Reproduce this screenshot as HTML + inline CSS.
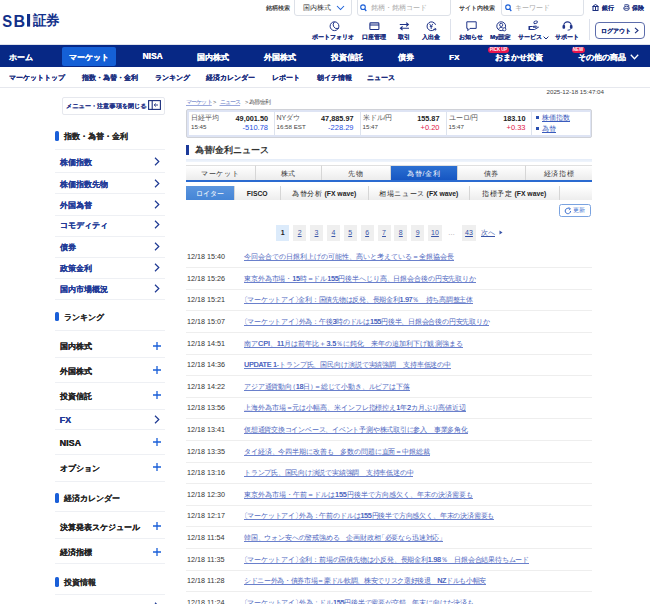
<!DOCTYPE html>
<html><head><meta charset="utf-8">
<style>
html,body{margin:0;padding:0;background:#fff;}
body{width:650px;height:604px;overflow:hidden;position:relative;font-family:"Liberation Sans",sans-serif;color:#222;}
.a{position:absolute;white-space:nowrap;}
.nv{color:#1b2f7e;}
.hdr-box{position:absolute;border:1px solid #dde1e8;border-radius:3px;background:#fff;box-sizing:border-box;}
.hl{font-size:6px;line-height:8px;color:#444;font-weight:normal;text-shadow:0.2px 0 0 #444;}
.icl{font-size:6px;line-height:8px;font-weight:bold;color:#1b2f7e;}
.nav{position:absolute;left:0;top:45px;width:650px;height:22px;background:#072885;}
.nvi{position:absolute;white-space:nowrap;top:51.5px;font-size:8px;line-height:11px;font-weight:bold;color:#fff;}
.sub{font-size:7px;line-height:10px;font-weight:bold;color:#1b2f7e;top:72.8px;}
.sline{position:absolute;left:55px;width:110px;height:1px;background:#eef0f4;}
.sh{position:absolute;white-space:nowrap;left:63.5px;font-size:8px;line-height:11px;font-weight:bold;color:#222;}
.pill{position:absolute;left:55px;width:4px;height:9.5px;border-radius:1.6px;background:#1a5fd8;}
.si{position:absolute;white-space:nowrap;left:59.5px;font-size:8px;line-height:10px;font-weight:bold;}
.blu{color:#213a97;}
.blk{color:#222;}
.chev{position:absolute;left:154px;width:6px;height:9px;}
.plus{position:absolute;left:153px;width:8px;height:8px;}
.dt{position:absolute;white-space:nowrap;left:187px;font-size:7.2px;line-height:9px;color:#333;}
.tt{position:absolute;white-space:nowrap;left:244px;font-size:7px;line-height:9px;color:#4d66c0;}
.rsep{position:absolute;left:186px;width:406px;height:1px;background:#eeeeee;}
.pg{position:absolute;top:224.5px;height:16px;width:13px;background:#efefef;font-size:7px;line-height:16px;text-align:center;color:#2f4ca6;text-decoration:underline;}
.si,.sub,.icl{text-shadow:0.35px 0 0 currentColor;}
.sh{text-shadow:0.15px 0 0 currentColor;color:#2a2a2a;}
.nvi{text-shadow:0.3px 0 0 #fff;}
</style></head><body>

<!-- HEADER -->
<svg class="a" style="left:0;top:8px" width="64" height="22" viewBox="0 0 64 22">
<text x="2.3" y="18.6" font-family="Liberation Sans" font-weight="bold" font-size="17.4" fill="#12308a" textLength="9.9" lengthAdjust="spacingAndGlyphs">S</text>
<text x="13.4" y="18.6" font-family="Liberation Sans" font-weight="bold" font-size="17.4" fill="#12308a" textLength="11.6" lengthAdjust="spacingAndGlyphs">B</text>
<rect x="27" y="6" width="3.1" height="12.6" fill="#12308a"/>
<text x="32.6" y="17.2" font-family="Liberation Sans" font-weight="bold" font-size="14" fill="#12308a" textLength="27" lengthAdjust="spacingAndGlyphs">証券</text>
</svg>

<div class="a hl" style="left:266px;top:4px;">銘柄検索</div>
<div class="hdr-box" style="left:294px;top:-3px;width:58px;height:18.5px;"></div>
<div class="a" style="left:303px;top:3px;font-size:7px;line-height:10px;color:#333;">国内株式</div>
<svg class="a" style="left:335.5px;top:5px" width="9" height="6" viewBox="0 0 9 6"><path d="M1 1 L4.5 4.5 L8 1" fill="none" stroke="#1a5fd8" stroke-width="1.05"/></svg>
<div class="hdr-box" style="left:356.5px;top:-3px;width:94px;height:18.5px;"></div>
<svg class="a" style="left:359.5px;top:3.5px" width="7" height="8" viewBox="0 0 7 8"><circle cx="3" cy="3.2" r="2.3" fill="none" stroke="#1a5fd8" stroke-width="1.1"/><path d="M4.6 5 L6.3 7" stroke="#1a5fd8" stroke-width="1.2"/></svg>
<div class="a" style="left:371px;top:3px;font-size:7px;line-height:10px;color:#aaa;">銘柄・銘柄コード</div>

<div class="a hl" style="left:459px;top:4px;">サイト内検索</div>
<div class="hdr-box" style="left:500.5px;top:-3px;width:83px;height:18.5px;"></div>
<svg class="a" style="left:505px;top:3.5px" width="7" height="8" viewBox="0 0 7 8"><circle cx="3" cy="3.2" r="2.3" fill="none" stroke="#1a5fd8" stroke-width="1.1"/><path d="M4.6 5 L6.3 7" stroke="#1a5fd8" stroke-width="1.2"/></svg>
<div class="a" style="left:515px;top:3px;font-size:7px;line-height:10px;color:#aaa;">キーワード</div>

<svg class="a" style="left:592px;top:4px" width="7" height="7" viewBox="0 0 7 7"><path d="M0.5 2.5 L3.5 0.5 L6.5 2.5 Z M1 3 V6 M3.5 3 V6 M6 3 V6 M0.5 6.5 H6.5" fill="none" stroke="#1b2f7e" stroke-width="1"/></svg>
<div class="a icl" style="left:601.5px;top:4.3px;">銀行</div>
<svg class="a" style="left:622.5px;top:3.8px" width="7" height="7" viewBox="0 0 7 7"><path d="M1.2 1.2 L3.5 0.5 L5.8 1.2 L5.8 2.6" fill="none" stroke="#1b2f7e" stroke-width="0.9"/><ellipse cx="3.5" cy="4.3" rx="2.8" ry="2.1" fill="none" stroke="#1b2f7e" stroke-width="0.9"/><path d="M1.2 4.3 H5.8" stroke="#1b2f7e" stroke-width="0.8"/></svg>
<div class="a icl" style="left:632px;top:4.3px;">保険</div>

<!-- icon row -->
<svg class="a" style="left:328.5px;top:20.5px" width="11" height="11" viewBox="0 0 11 11"><circle cx="5.5" cy="5.2" r="4.4" fill="none" stroke="#1f3388" stroke-width="1"/><path d="M5.5 0.8 Q3.2 3 4.6 5.6 Q6.2 8.4 9.6 7.4" fill="none" stroke="#1f3388" stroke-width="1"/></svg>
<div class="a icl" style="left:312px;top:33px;">ポートフォリオ</div>
<svg class="a" style="left:369px;top:21.5px" width="11" height="9" viewBox="0 0 11 9"><rect x="0.9" y="0.9" width="9" height="6.6" rx="0.8" fill="none" stroke="#1f3388" stroke-width="1.1"/><path d="M0.9 3 H9.9" stroke="#1f3388" stroke-width="1.1"/></svg>
<div class="a icl" style="left:362px;top:33px;">口座管理</div>
<svg class="a" style="left:398.5px;top:21.5px" width="11" height="9" viewBox="0 0 11 9"><path d="M0.8 2.5 H9.2 M7.2 0.6 L9.4 2.5 L7.2 4.4 M10 6.3 H1.6 M3.6 4.4 L1.4 6.3 L3.6 8.2" fill="none" stroke="#1f3388" stroke-width="1.1"/></svg>
<div class="a icl" style="left:398px;top:33px;">取引</div>
<svg class="a" style="left:425.5px;top:20.5px" width="11" height="11" viewBox="0 0 11 11"><path d="M9.4 7.2 A4.4 4.4 0 1 1 9.6 3.8" fill="none" stroke="#1f3388" stroke-width="1"/><path d="M3.5 2.8 L5.2 5.4 L6.9 2.8 M5.2 5.4 V8 M3.8 5.6 H6.6" fill="none" stroke="#1f3388" stroke-width="0.9"/><path d="M7.2 8.4 H10.2 M8.8 7.2 L10.2 8.4 L8.8 9.6" fill="none" stroke="#1f3388" stroke-width="0.8"/></svg>
<div class="a icl" style="left:421.5px;top:33px;">入出金</div>

<div class="a" style="left:449.5px;top:19px;width:1.2px;height:21px;background:#dde1eb;"></div>
<svg class="a" style="left:465.5px;top:20.5px" width="11" height="11" viewBox="0 0 11 11"><path d="M0.8 0.8 H10.2 V7.4 H4 L1.8 9.6 V7.4 H0.8 Z" fill="none" stroke="#1f3388" stroke-width="1"/></svg>
<div class="a icl" style="left:459px;top:33px;">お知らせ</div>
<svg class="a" style="left:495.5px;top:20.5px" width="11" height="11" viewBox="0 0 11 11"><circle cx="5.2" cy="5.2" r="4.4" fill="none" stroke="#1f3388" stroke-width="1"/><circle cx="5.2" cy="3.9" r="1.6" fill="none" stroke="#1f3388" stroke-width="0.9"/><path d="M2.4 8.2 Q3.6 5.8 6.6 6.4" fill="none" stroke="#1f3388" stroke-width="0.9"/><circle cx="8.3" cy="8.3" r="1.6" fill="#fff" stroke="#1f3388" stroke-width="0.9"/></svg>
<div class="a icl" style="left:490px;top:33px;">My設定</div>
<svg class="a" style="left:527.5px;top:19.5px" width="12" height="11" viewBox="0 0 12 11"><ellipse cx="7.6" cy="2.3" rx="1.8" ry="1.2" fill="none" stroke="#1f3388" stroke-width="0.9" transform="rotate(-25 7.6 2.3)"/><path d="M1 6.5 H4.5 L8.4 6 Q9.2 6.5 8.4 7.2 H5 M1 9.5 H6.5 L10.8 7" fill="none" stroke="#1f3388" stroke-width="1"/><rect x="0.5" y="6" width="1.6" height="4" fill="#1f3388"/></svg>
<div class="a icl" style="left:518px;top:33px;">サービス</div><svg class="a" style="left:543px;top:36px" width="6" height="4" viewBox="0 0 6 4"><path d="M0.6 0.6 L3 3 L5.4 0.6" fill="none" stroke="#1b2f7e" stroke-width="1"/></svg>
<svg class="a" style="left:562px;top:21px" width="11" height="10" viewBox="0 0 11 10"><path d="M1.8 5.5 V4.6 A3.7 3.7 0 0 1 9.2 4.6 V5.5" fill="none" stroke="#1f3388" stroke-width="1.1"/><rect x="0.5" y="4" width="2.6" height="3.8" rx="1" fill="#1f3388"/><rect x="7.9" y="4" width="2.6" height="3.8" rx="1" fill="#1f3388"/><path d="M8.8 7.6 Q8.6 9.2 5.6 9.2" fill="none" stroke="#1f3388" stroke-width="0.9"/></svg>
<div class="a icl" style="left:555px;top:33px;">サポート</div>
<div class="a" style="left:589px;top:19px;width:1.2px;height:21px;background:#dde1eb;"></div>
<div class="a" style="left:595px;top:22px;width:49.5px;height:16.8px;border:1px solid #5d6dab;border-radius:4px;box-sizing:border-box;"></div>
<div class="a icl" style="left:600.5px;top:26.5px;font-size:6px;">ログアウト</div>
<svg class="a" style="left:633.5px;top:27px" width="5" height="7" viewBox="0 0 5 7"><path d="M1 0.8 L4 3.5 L1 6.2" fill="none" stroke="#1b2f7e" stroke-width="1.1"/></svg>

<div class="a" style="left:0;top:44px;width:650px;height:1px;background:#dfe2ea;"></div>

<!-- NAV -->
<div class="nav"></div>
<div class="a" style="left:62px;top:47px;width:54px;height:18.5px;background:#1560d6;border-radius:2px;"></div>
<div class="a nvi" style="left:9px;">ホーム</div>
<div class="a nvi" style="left:68.5px;">マーケット</div>
<div class="a nvi" style="left:142.5px;font-size:8.4px;top:51.3px;">NISA</div>
<div class="a nvi" style="left:196.5px;">国内株式</div>
<div class="a nvi" style="left:263.5px;">外国株式</div>
<div class="a nvi" style="left:331px;">投資信託</div>
<div class="a nvi" style="left:397.5px;">債券</div>
<div class="a nvi" style="left:449px;">FX</div>
<div class="a nvi" style="left:494.5px;">おまかせ投資</div>
<div class="a nvi" style="left:578px;">その他の商品</div>
<svg class="a" style="left:630px;top:53.5px" width="9" height="6" viewBox="0 0 9 6"><path d="M0.8 0.8 L4.5 4.8 L8.2 0.8" fill="none" stroke="#fff" stroke-width="1.3"/></svg>
<div class="a" style="left:488px;top:47px;width:21px;height:5.5px;background:#e8164d;border-radius:3px;color:#fff;font-size:4.5px;line-height:5.5px;font-weight:bold;text-align:center;letter-spacing:-0.1px;">PICK UP</div>
<div class="a" style="left:571.5px;top:47px;width:13px;height:5.5px;background:#e8164d;border-radius:3px;color:#fff;font-size:4.5px;line-height:5.5px;font-weight:bold;text-align:center;">NEW</div>

<!-- SUB NAV -->
<div class="a sub" style="left:9px;">マーケットトップ</div>
<div class="a sub" style="left:82px;">指数・為替・金利</div>
<div class="a sub" style="left:155px;">ランキング</div>
<div class="a sub" style="left:206px;">経済カレンダー</div>
<div class="a sub" style="left:272px;">レポート</div>
<div class="a sub" style="left:317px;">朝イチ情報</div>
<div class="a sub" style="left:367px;">ニュース</div>
<div class="a" style="left:0;top:87px;width:650px;height:1px;background:#e6e8ee;"></div>

<!-- SIDEBAR -->
<div class="a" style="left:61.5px;top:97px;width:103.5px;height:17.5px;border:1px solid #e6e8ee;border-radius:2px;box-sizing:border-box;"></div>
<div class="a" style="left:66px;top:102.3px;font-size:6px;line-height:8px;font-weight:bold;color:#1f3388;letter-spacing:0.2px;text-shadow:0.3px 0 0 #1f3388;">メニュー・注意事項を閉じる</div>
<svg class="a" style="left:148px;top:100px" width="13" height="10" viewBox="0 0 13 10"><rect x="0.6" y="0.6" width="11.8" height="8.8" fill="none" stroke="#1b2f7e" stroke-width="1.1"/><path d="M4.2 0.6 V9.4" stroke="#1b2f7e" stroke-width="1.1"/><path d="M6.2 5 H10 M7.8 3.5 L6.2 5 L7.8 6.5" fill="none" stroke="#1b2f7e" stroke-width="0.9"/></svg>
<div class="pill" style="top:131.1px"></div>
<div class="sh" style="top:130.9px">指数・為替・金利</div>
<div class="sline" style="top:148.5px"></div>
<div class="si blu" style="top:157.9px;">株価指数</div>
<svg class="chev" style="top:156.9px" viewBox="0 0 6 9"><path d="M1 0.8 L4.8 4.5 L1 8.2" fill="none" stroke="#1f3a93" stroke-width="1.2"/></svg>
<div class="sline" style="top:172px"></div>
<div class="si blu" style="top:179.5px;">株価指数先物</div>
<svg class="chev" style="top:178.5px" viewBox="0 0 6 9"><path d="M1 0.8 L4.8 4.5 L1 8.2" fill="none" stroke="#1f3a93" stroke-width="1.2"/></svg>
<div class="sline" style="top:193.3px"></div>
<div class="si blu" style="top:200.5px;">外国為替</div>
<svg class="chev" style="top:199.5px" viewBox="0 0 6 9"><path d="M1 0.8 L4.8 4.5 L1 8.2" fill="none" stroke="#1f3a93" stroke-width="1.2"/></svg>
<div class="sline" style="top:214.5px"></div>
<div class="si blu" style="top:221.3px;">コモディティ</div>
<svg class="chev" style="top:220.3px" viewBox="0 0 6 9"><path d="M1 0.8 L4.8 4.5 L1 8.2" fill="none" stroke="#1f3a93" stroke-width="1.2"/></svg>
<div class="sline" style="top:235.5px"></div>
<div class="si blu" style="top:242.5px;">債券</div>
<svg class="chev" style="top:241.5px" viewBox="0 0 6 9"><path d="M1 0.8 L4.8 4.5 L1 8.2" fill="none" stroke="#1f3a93" stroke-width="1.2"/></svg>
<div class="sline" style="top:256.5px"></div>
<div class="si blu" style="top:263.8px;">政策金利</div>
<svg class="chev" style="top:262.8px" viewBox="0 0 6 9"><path d="M1 0.8 L4.8 4.5 L1 8.2" fill="none" stroke="#1f3a93" stroke-width="1.2"/></svg>
<div class="sline" style="top:277.7px"></div>
<div class="si blu" style="top:285.0px;">国内市場概況</div>
<svg class="chev" style="top:284.0px" viewBox="0 0 6 9"><path d="M1 0.8 L4.8 4.5 L1 8.2" fill="none" stroke="#1f3a93" stroke-width="1.2"/></svg>
<div class="sline" style="top:299px"></div>
<div class="pill" style="top:311.7px"></div>
<div class="sh" style="top:311.5px">ランキング</div>
<div class="sline" style="top:330.4px"></div>
<div class="si blk" style="top:342.1px;">国内株式</div>
<svg class="plus" style="top:341.6px" viewBox="0 0 8 8"><path d="M4 0 V8 M0 4 H8" stroke="#1a5fd8" stroke-width="1.3"/></svg>
<div class="sline" style="top:357.4px"></div>
<div class="si blk" style="top:366.9px;">外国株式</div>
<svg class="plus" style="top:366.4px" viewBox="0 0 8 8"><path d="M4 0 V8 M0 4 H8" stroke="#1a5fd8" stroke-width="1.3"/></svg>
<div class="sline" style="top:382.4px"></div>
<div class="si blk" style="top:391.7px;">投資信託</div>
<svg class="plus" style="top:391.2px" viewBox="0 0 8 8"><path d="M4 0 V8 M0 4 H8" stroke="#1a5fd8" stroke-width="1.3"/></svg>
<div class="sline" style="top:408.6px"></div>
<div class="si blu" style="top:414.9px;font-size:9px;">FX</div>
<svg class="chev" style="top:414.9px" viewBox="0 0 6 9"><path d="M1 0.8 L4.8 4.5 L1 8.2" fill="none" stroke="#1f3a93" stroke-width="1.2"/></svg>
<div class="sline" style="top:429.4px"></div>
<div class="si blk" style="top:437.9px;font-size:9px;">NISA</div>
<svg class="plus" style="top:438.4px" viewBox="0 0 8 8"><path d="M4 0 V8 M0 4 H8" stroke="#1a5fd8" stroke-width="1.3"/></svg>
<div class="sline" style="top:454.4px"></div>
<div class="si blk" style="top:463.9px;">オプション</div>
<svg class="plus" style="top:463.4px" viewBox="0 0 8 8"><path d="M4 0 V8 M0 4 H8" stroke="#1a5fd8" stroke-width="1.3"/></svg>
<div class="sline" style="top:480.6px"></div>
<div class="pill" style="top:493.09999999999997px"></div>
<div class="sh" style="top:492.9px">経済カレンダー</div>
<div class="sline" style="top:510.6px"></div>
<div class="si blk" style="top:522.9px;">決算発表スケジュール</div>
<svg class="plus" style="top:522.4px" viewBox="0 0 8 8"><path d="M4 0 V8 M0 4 H8" stroke="#1a5fd8" stroke-width="1.3"/></svg>
<div class="sline" style="top:538.4px"></div>
<div class="si blk" style="top:548.1px;">経済指標</div>
<svg class="plus" style="top:547.6px" viewBox="0 0 8 8"><path d="M4 0 V8 M0 4 H8" stroke="#1a5fd8" stroke-width="1.3"/></svg>
<div class="sline" style="top:563.4px"></div>
<div class="pill" style="top:577.1px"></div>
<div class="sh" style="top:576.9px">投資情報</div>
<div class="sline" style="top:594.4px"></div>
<svg class="chev" style="top:602.3px" viewBox="0 0 6 9"><path d="M1 0.8 L4.8 4.5 L1 8.2" fill="none" stroke="#1f3a93" stroke-width="1.2"/></svg>


<!-- MAIN -->
<div class="a" style="left:186px;top:97.8px;font-size:5.7px;line-height:8px;letter-spacing:-0.85px;color:#6378c4;text-decoration:underline;text-decoration-color:#9aa8dc;">マーケット</div>
<div class="a" style="left:213px;top:97.8px;font-size:5.7px;line-height:8px;letter-spacing:-0.85px;color:#555;">&gt;</div>
<div class="a" style="left:219.5px;top:97.8px;font-size:5.7px;line-height:8px;letter-spacing:-0.85px;color:#6378c4;text-decoration:underline;text-decoration-color:#9aa8dc;">ニュース</div>
<div class="a" style="left:245px;top:97.8px;font-size:5.7px;line-height:8px;letter-spacing:-0.85px;color:#555;">&gt;</div>
<div class="a" style="left:249px;top:97.8px;font-size:5.7px;line-height:8px;letter-spacing:-0.85px;color:#555;">為替/金利</div>
<div class="a" style="left:546.5px;top:88px;font-size:6.2px;line-height:8px;color:#444;">2025-12-18 15:47:04</div>
<div class="a" style="left:186px;top:109px;width:406px;height:28.5px;background:#dee4f4;border:1px solid #d0d2d8;border-radius:2px;box-sizing:border-box;"></div>
<div class="a" style="left:189px;top:112px;width:400.5px;height:23px;background:#fff;"></div>
<div class="a" style="left:274px;top:112px;width:1px;height:23px;background:#dde3ee;"></div>
<div class="a" style="left:360px;top:112px;width:1px;height:23px;background:#dde3ee;"></div>
<div class="a" style="left:445.5px;top:112px;width:1px;height:23px;background:#dde3ee;"></div>
<div class="a" style="left:530.5px;top:112px;width:1px;height:23px;background:#dde3ee;"></div>
<div class="a" style="left:191px;top:113px;font-size:7px;line-height:9px;color:#555;">日経平均</div>
<div class="a" style="left:191px;top:122.5px;font-size:6.2px;line-height:8px;color:#444;">15:45</div>
<div class="a" style="left:188px;width:80px;text-align:right;top:113.5px;font-size:7.3px;line-height:9px;font-weight:bold;color:#222;">49,001.50</div>
<div class="a" style="left:188px;width:80px;text-align:right;top:122.7px;font-size:7.5px;line-height:9px;color:#1f50e0;">-510.78</div>
<div class="a" style="left:276.5px;top:113px;font-size:7px;line-height:9px;color:#555;">NYダウ</div>
<div class="a" style="left:276.5px;top:122.5px;font-size:6.2px;line-height:8px;color:#444;">16:58 EST</div>
<div class="a" style="left:273.5px;width:80px;text-align:right;top:113.5px;font-size:7.3px;line-height:9px;font-weight:bold;color:#222;">47,885.97</div>
<div class="a" style="left:273.5px;width:80px;text-align:right;top:122.7px;font-size:7.5px;line-height:9px;color:#1f50e0;">-228.29</div>
<div class="a" style="left:362.5px;top:113px;font-size:7px;line-height:9px;color:#555;">米ドル/円</div>
<div class="a" style="left:362.5px;top:122.5px;font-size:6.2px;line-height:8px;color:#444;">15:47</div>
<div class="a" style="left:359.5px;width:80px;text-align:right;top:113.5px;font-size:7.3px;line-height:9px;font-weight:bold;color:#222;">155.87</div>
<div class="a" style="left:359.5px;width:80px;text-align:right;top:122.7px;font-size:7.5px;line-height:9px;color:#e0204a;">+0.20</div>
<div class="a" style="left:448.5px;top:113px;font-size:7px;line-height:9px;color:#555;">ユーロ/円</div>
<div class="a" style="left:448.5px;top:122.5px;font-size:6.2px;line-height:8px;color:#444;">15:47</div>
<div class="a" style="left:445.5px;width:80px;text-align:right;top:113.5px;font-size:7.3px;line-height:9px;font-weight:bold;color:#222;">183.10</div>
<div class="a" style="left:445.5px;width:80px;text-align:right;top:122.7px;font-size:7.5px;line-height:9px;color:#e0204a;">+0.33</div>
<div class="a" style="left:535.5px;top:115.5px;width:3.5px;height:3.5px;background:#2a4fb0;"></div>
<div class="a" style="left:542px;top:112.8px;font-size:7px;line-height:9px;color:#3a5bbd;text-decoration:underline;">株価指数</div>
<div class="a" style="left:535.5px;top:126.60000000000001px;width:3.5px;height:3.5px;background:#2a4fb0;"></div>
<div class="a" style="left:542px;top:123.9px;font-size:7px;line-height:9px;color:#3a5bbd;text-decoration:underline;">為替</div>
<div class="a" style="left:186px;top:145.4px;width:3px;height:9.3px;background:#1c3a9a;"></div>
<div class="a" style="left:194.5px;top:144.5px;font-size:9px;line-height:11px;font-weight:bold;color:#333;">為替/金利ニュース</div>
<div class="a" style="left:186px;top:158.5px;width:406px;height:3px;background:linear-gradient(#e4ecf8,#f0f5fc);"></div>
<div class="a" style="left:186px;top:165px;width:68.5px;height:15px;background:linear-gradient(#ffffff,#ececec);box-sizing:border-box;border-top:1px solid #e0e0e0;font-size:6.8px;line-height:16px;letter-spacing:0.7px;text-align:center;color:#333;">マーケット</div>
<div class="a" style="left:254.5px;top:165px;width:66.5px;height:15px;background:linear-gradient(#ffffff,#ececec);border-left:1px solid #d6d6d6;box-sizing:border-box;border-top:1px solid #e0e0e0;font-size:6.8px;line-height:16px;letter-spacing:0.7px;text-align:center;color:#333;">株式</div>
<div class="a" style="left:321px;top:165px;width:68.5px;height:15px;background:linear-gradient(#ffffff,#ececec);border-left:1px solid #d6d6d6;box-sizing:border-box;border-top:1px solid #e0e0e0;font-size:6.8px;line-height:16px;letter-spacing:0.7px;text-align:center;color:#333;">先物</div>
<div class="a" style="left:389.5px;top:165px;width:67.5px;height:15px;background:linear-gradient(#2c70d2,#1656c2);border-left:1px solid #d6d6d6;box-sizing:border-box;border-top:1px solid #e0e0e0;font-size:6.8px;line-height:16px;letter-spacing:0.7px;text-align:center;color:#fff;">為替/金利</div>
<div class="a" style="left:457px;top:165px;width:68px;height:15px;background:linear-gradient(#ffffff,#ececec);border-left:1px solid #d6d6d6;box-sizing:border-box;border-top:1px solid #e0e0e0;font-size:6.8px;line-height:16px;letter-spacing:0.7px;text-align:center;color:#333;">債券</div>
<div class="a" style="left:525px;top:165px;width:67px;height:15px;background:linear-gradient(#ffffff,#ececec);border-left:1px solid #d6d6d6;box-sizing:border-box;border-top:1px solid #e0e0e0;font-size:6.8px;line-height:16px;letter-spacing:0.7px;text-align:center;color:#333;">経済指標</div>
<div class="a" style="left:186px;top:179.8px;width:406px;height:1.8px;background:#2a6ad0;"></div>
<div class="a" style="left:186px;top:186px;width:48px;height:14px;background:linear-gradient(#5b95de,#4585d6);box-sizing:border-box;font-size:6.8px;line-height:16px;font-weight:normal;text-align:center;color:#fff;">ロイター</div>
<div class="a" style="left:234px;top:186px;width:45.5px;height:14px;background:linear-gradient(#ffffff,#ededed);border-left:1px solid #d6d6d6;box-sizing:border-box;font-size:6.8px;line-height:16px;font-weight:bold;text-align:center;color:#222;">FISCO</div>
<div class="a" style="left:279.5px;top:186px;width:88.5px;height:14px;background:linear-gradient(#ffffff,#ededed);border-left:1px solid #d6d6d6;box-sizing:border-box;font-size:6.8px;line-height:16px;font-weight:bold;text-align:center;color:#222;"><span style="font-weight:normal;letter-spacing:0.6px">為替分析</span> (FX wave)</div>
<div class="a" style="left:368px;top:186px;width:100.5px;height:14px;background:linear-gradient(#ffffff,#ededed);border-left:1px solid #d6d6d6;box-sizing:border-box;font-size:6.8px;line-height:16px;font-weight:bold;text-align:center;color:#222;"><span style="font-weight:normal;letter-spacing:0.6px">相場ニュース</span> (FX wave)</div>
<div class="a" style="left:468.5px;top:186px;width:90.5px;height:14px;background:linear-gradient(#ffffff,#ededed);border-left:1px solid #d6d6d6;box-sizing:border-box;font-size:6.8px;line-height:16px;font-weight:bold;text-align:center;color:#222;"><span style="font-weight:normal;letter-spacing:0.6px">指標予定</span> (FX wave)</div>
<div class="a" style="left:559px;top:186px;width:33px;height:14px;background:linear-gradient(#ffffff,#ededed);border-left:1px solid #d6d6d6;box-sizing:border-box;font-size:6.8px;line-height:16px;font-weight:normal;text-align:center;color:#222;"></div>
<div class="a" style="left:558.8px;top:204px;width:32px;height:12.6px;border:1px solid #7aa3e0;border-radius:2.5px;box-sizing:border-box;"></div>
<svg class="a" style="left:564px;top:206.5px" width="8" height="8" viewBox="0 0 8 8"><path d="M6.6 4 A2.7 2.7 0 1 1 5.5 1.8" fill="none" stroke="#3a6fd0" stroke-width="1"/><path d="M4.6 0.6 L6.4 1.6 L5.2 3.2" fill="none" stroke="#3a6fd0" stroke-width="0.9"/></svg>
<div class="a" style="left:573px;top:206px;font-size:6px;line-height:8px;color:#3a6fd0;">更新</div>
<div class="pg" style="left:276.3px;width:13px;background:#dcebfb;color:#222;text-decoration:none;font-weight:bold;">1</div>
<div class="pg" style="left:293.2px;width:13px;background:#efefef;color:#3a55a8;text-decoration:underline;font-weight:normal;">2</div>
<div class="pg" style="left:310.0px;width:13px;background:#efefef;color:#3a55a8;text-decoration:underline;font-weight:normal;">3</div>
<div class="pg" style="left:326.9px;width:13px;background:#efefef;color:#3a55a8;text-decoration:underline;font-weight:normal;">4</div>
<div class="pg" style="left:343.7px;width:13px;background:#efefef;color:#3a55a8;text-decoration:underline;font-weight:normal;">5</div>
<div class="pg" style="left:360.6px;width:13px;background:#efefef;color:#3a55a8;text-decoration:underline;font-weight:normal;">6</div>
<div class="pg" style="left:377.5px;width:13px;background:#efefef;color:#3a55a8;text-decoration:underline;font-weight:normal;">7</div>
<div class="pg" style="left:394.3px;width:13px;background:#efefef;color:#3a55a8;text-decoration:underline;font-weight:normal;">8</div>
<div class="pg" style="left:411.2px;width:13px;background:#efefef;color:#3a55a8;text-decoration:underline;font-weight:normal;">9</div>
<div class="pg" style="left:428.0px;width:14px;background:#efefef;color:#3a55a8;text-decoration:underline;font-weight:normal;">10</div>
<div class="a" style="left:448px;top:228px;font-size:7px;line-height:9px;color:#999;">…</div>
<div class="pg" style="left:462px;width:14px;">43</div>
<div class="a" style="left:481px;top:228px;font-size:7px;line-height:9px;color:#3a55a8;text-decoration:underline;">次へ</div>
<svg class="a" style="left:499px;top:230px" width="4" height="5" viewBox="0 0 4 5"><path d="M0.5 0.5 L3.5 2.5 L0.5 4.5 Z" fill="#3a55a8"/></svg>
<div class="dt" style="top:252.1px">12/18 15:40</div>
<div class="tt" style="left:244px;top:252.1px;letter-spacing:-0.013px">今回会合での日銀利上げの可能性、高いと考えている＝全銀協会長</div>
<div class="a" style="left:244px;top:260.2px;width:209.6px;height:0.8px;background:#6a80cc;"></div>
<div class="rsep" style="top:267.2px"></div>
<div class="dt" style="top:273.7px">12/18 15:26</div>
<div class="tt" style="left:244px;top:273.7px;letter-spacing:-0.125px">東京外為市場・<span style="text-shadow:0.3px 0 0 currentColor">15</span>時＝ドル<span style="text-shadow:0.3px 0 0 currentColor">155</span>円後半へじり高、日銀会合後の円安先取りか</div>
<div class="a" style="left:244px;top:281.8px;width:232.0px;height:0.8px;background:#6a80cc;"></div>
<div class="rsep" style="top:288.8px"></div>
<div class="dt" style="top:295.3px">12/18 15:21</div>
<div class="tt" style="left:243.5px;top:295.3px;letter-spacing:-0.249px"><span style="margin-left:-3px">〔</span>マーケットアイ<span style="margin-right:-3px">〕</span>金利：国債先物は反発、長期金利<span style="text-shadow:0.3px 0 0 currentColor">1.97</span>％　持ち高調整主体</div>
<div class="a" style="left:244px;top:303.4px;width:229.0px;height:0.8px;background:#6a80cc;"></div>
<div class="rsep" style="top:310.4px"></div>
<div class="dt" style="top:316.9px">12/18 15:07</div>
<div class="tt" style="left:243.5px;top:316.9px;letter-spacing:-0.223px"><span style="margin-left:-3px">〔</span>マーケットアイ<span style="margin-right:-3px">〕</span>外為：午後<span style="text-shadow:0.3px 0 0 currentColor">3</span>時のドルは<span style="text-shadow:0.3px 0 0 currentColor">155</span>円後半、日銀会合後の円安先取りか</div>
<div class="a" style="left:244px;top:325.0px;width:245.4px;height:0.8px;background:#6a80cc;"></div>
<div class="rsep" style="top:332.0px"></div>
<div class="dt" style="top:338.5px">12/18 14:51</div>
<div class="tt" style="left:244px;top:338.5px;letter-spacing:0.026px">南ア<span style="text-shadow:0.3px 0 0 currentColor">CPI</span>、<span style="text-shadow:0.3px 0 0 currentColor">11</span>月は前年比＋<span style="text-shadow:0.3px 0 0 currentColor">3.5</span>％に鈍化　来年の追加利下げ観測強まる</div>
<div class="a" style="left:244px;top:346.6px;width:218.6px;height:0.8px;background:#6a80cc;"></div>
<div class="rsep" style="top:353.6px"></div>
<div class="dt" style="top:360.1px">12/18 14:36</div>
<div class="tt" style="left:244px;top:360.1px;letter-spacing:-0.115px"><span style="text-shadow:0.3px 0 0 currentColor">UPDATE 1</span>-トランプ氏、国民向け演説で実績強調　支持率低迷の中</div>
<div class="a" style="left:244px;top:368.2px;width:207.2px;height:0.8px;background:#6a80cc;"></div>
<div class="rsep" style="top:375.2px"></div>
<div class="dt" style="top:381.7px">12/18 14:22</div>
<div class="tt" style="left:244px;top:381.7px;letter-spacing:-0.158px">アジア通貨動向<span style="margin-left:-3px">（</span><span style="text-shadow:0.3px 0 0 currentColor">18</span>日<span style="margin-right:-3px">）</span>＝総じて小動き、ルピアは下落</div>
<div class="a" style="left:244px;top:389.8px;width:165.8px;height:0.8px;background:#6a80cc;"></div>
<div class="rsep" style="top:396.8px"></div>
<div class="dt" style="top:403.3px">12/18 13:56</div>
<div class="tt" style="left:244px;top:403.3px;letter-spacing:-0.082px">上海外為市場＝元は小幅高、米インフレ指標控え<span style="text-shadow:0.3px 0 0 currentColor">1</span>年<span style="text-shadow:0.3px 0 0 currentColor">2</span>カ月ぶり高値近辺</div>
<div class="a" style="left:244px;top:411.4px;width:222.1px;height:0.8px;background:#6a80cc;"></div>
<div class="rsep" style="top:418.4px"></div>
<div class="dt" style="top:424.9px">12/18 13:41</div>
<div class="tt" style="left:244px;top:424.9px;letter-spacing:-0.224px">仮想通貨交換コインベース、イベント予測や株式取引に参入　事業多角化</div>
<div class="a" style="left:244px;top:433.0px;width:223.6px;height:0.8px;background:#6a80cc;"></div>
<div class="rsep" style="top:440.0px"></div>
<div class="dt" style="top:446.5px">12/18 13:35</div>
<div class="tt" style="left:244px;top:446.5px;letter-spacing:-0.122px">タイ経済、今四半期に改善も　多数の問題に直面＝中銀総裁</div>
<div class="a" style="left:244px;top:454.6px;width:185.7px;height:0.8px;background:#6a80cc;"></div>
<div class="rsep" style="top:461.6px"></div>
<div class="dt" style="top:468.1px">12/18 13:16</div>
<div class="tt" style="left:244px;top:468.1px;letter-spacing:-0.228px">トランプ氏、国民向け演説で実績強調　支持率低迷の中</div>
<div class="a" style="left:244px;top:476.2px;width:169.3px;height:0.8px;background:#6a80cc;"></div>
<div class="rsep" style="top:483.2px"></div>
<div class="dt" style="top:489.7px">12/18 12:30</div>
<div class="tt" style="left:244px;top:489.7px;letter-spacing:0.0px">東京外為市場・午前＝ドルは<span style="text-shadow:0.3px 0 0 currentColor">155</span>円後半で方向感欠く、年末の決済需要も</div>
<div class="a" style="left:244px;top:497.8px;width:228.7px;height:0.8px;background:#6a80cc;"></div>
<div class="rsep" style="top:504.8px"></div>
<div class="dt" style="top:511.3px">12/18 12:17</div>
<div class="tt" style="left:243.5px;top:511.3px;letter-spacing:-0.177px"><span style="margin-left:-3px">〔</span>マーケットアイ<span style="margin-right:-3px">〕</span>外為：午前のドルは<span style="text-shadow:0.3px 0 0 currentColor">155</span>円後半で方向感欠く、年末の決済需要も</div>
<div class="a" style="left:244px;top:519.4px;width:250.3px;height:0.8px;background:#6a80cc;"></div>
<div class="rsep" style="top:526.4px"></div>
<div class="dt" style="top:532.9px">12/18 11:54</div>
<div class="tt" style="left:244px;top:532.9px;letter-spacing:-0.167px">韓国、ウォン安への警戒強める　企画財政相<span style="margin-left:-3px">「</span>必要なら迅速対応<span style="margin-right:-3px">」</span></div>
<div class="a" style="left:244px;top:541.0px;width:199.0px;height:0.8px;background:#6a80cc;"></div>
<div class="rsep" style="top:548.0px"></div>
<div class="dt" style="top:554.5px">12/18 11:35</div>
<div class="tt" style="left:243.5px;top:554.5px;letter-spacing:-0.205px"><span style="margin-left:-3px">〔</span>マーケットアイ<span style="margin-right:-3px">〕</span>金利：前場の国債先物は小反発、長期金利<span style="text-shadow:0.3px 0 0 currentColor">1.98</span>％　日銀会合結果待ちムード</div>
<div class="a" style="left:244px;top:562.6px;width:285.0px;height:0.8px;background:#6a80cc;"></div>
<div class="rsep" style="top:569.6px"></div>
<div class="dt" style="top:576.1px">12/18 11:28</div>
<div class="tt" style="left:244px;top:576.1px;letter-spacing:-0.335px">シドニー外為・債券市場＝豪ドル軟調、株安でリスク選好後退　<span style="text-shadow:0.3px 0 0 currentColor">NZ</span>ドルも小幅安</div>
<div class="a" style="left:244px;top:584.2px;width:242.0px;height:0.8px;background:#6a80cc;"></div>
<div class="rsep" style="top:591.2px"></div>
<div class="dt" style="top:597.7px">12/18 11:24</div>
<div class="tt" style="left:243.5px;top:597.7px;letter-spacing:-0.177px"><span style="margin-left:-3px">〔</span>マーケットアイ<span style="margin-right:-3px">〕</span>外為：ドル<span style="text-shadow:0.3px 0 0 currentColor">155</span>円後半で需要が交錯、年末に向けた決済も</div>
<div class="a" style="left:244px;top:605.8px;width:230.0px;height:0.8px;background:#6a80cc;"></div>
<div class="rsep" style="top:612.8px"></div>


</body></html>
